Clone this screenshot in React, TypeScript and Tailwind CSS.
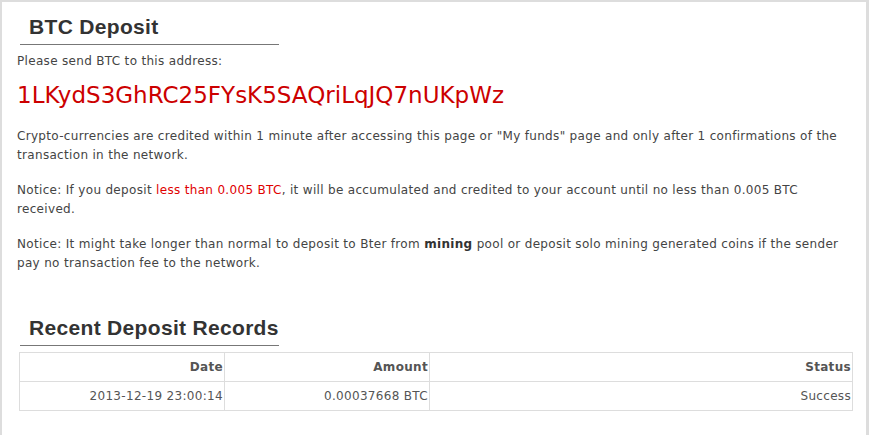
import React from 'react';

const records = [
  { date: '2013-12-19 23:00:14', amount: '0.00037668 BTC', status: 'Success' },
];

const SectionTitle: React.FC<{ children: React.ReactNode }> = ({ children }) => (
  <div className="w-[259px] border-b border-[#777] pl-[9px] pb-[5px]">
    <h2 className="font-['Liberation_Sans',Arial,sans-serif] text-[21px] font-bold leading-[24px] text-[#333]">
      {children}
    </h2>
  </div>
);

export default function App() {
  return (
    <div className="min-h-[435px] bg-[#ddd] pl-[2px] pt-[2px] pr-[3px]">
      <div className="min-h-[433px] bg-white pl-[15px] pr-[13px] pt-[13px] font-['DejaVu_Sans',sans-serif] text-[12px] leading-[19px] tracking-[0.32px] text-[#444]">
        <div className="pl-[3px]">
          <SectionTitle>BTC Deposit</SectionTitle>
        </div>
        <p className="mt-[7px]">Please send BTC to this address:</p>
        <p className="mt-[9px] text-[23px] leading-[30px] tracking-normal text-[#cc0000]">1LKydS3GhRC25FYsK5SAQriLqJQ7nUKpWz</p>

        <p className="mt-[17px]">
          Crypto-currencies are credited within 1 minute after accessing this page or "My funds" page and only after 1
          confirmations of the transaction in the network.
        </p>
        <p className="mt-[16px]">
          Notice: If you deposit <span className="text-[#e00000]">less than 0.005 BTC</span>, it will be accumulated and
          credited to your account until no less than 0.005 BTC received.
        </p>
        <p className="mt-[16px]">
          Notice: It might take longer than normal to deposit to Bter from <b className="text-[#333]">mining</b> pool or
          deposit solo mining generated coins if the sender pay no transaction fee to the network.
        </p>

        <div className="mt-[43px] pl-[3px]">
          <SectionTitle>Recent Deposit Records</SectionTitle>
        </div>

        <table className="mt-[6px] ml-[2px] w-[834px] border-collapse border border-[#ddd] text-right text-[#555]">
          <thead>
            <tr className="h-[29px]">
              <th className="w-[205px] border border-[#ddd] px-[1px] font-bold">Date</th>
              <th className="w-[205px] border border-[#ddd] px-[1px] font-bold">Amount</th>
              <th className="border border-[#ddd] px-[1px] font-bold">Status</th>
            </tr>
          </thead>
          <tbody>
            {records.map((r) => (
              <tr key={r.date} className="h-[29px]">
                <td className="border border-[#ddd] px-[1px]">{r.date}</td>
                <td className="border border-[#ddd] px-[1px]">{r.amount}</td>
                <td className="border border-[#ddd] px-[1px]">{r.status}</td>
              </tr>
            ))}
          </tbody>
        </table>
      </div>
    </div>
  );
}
